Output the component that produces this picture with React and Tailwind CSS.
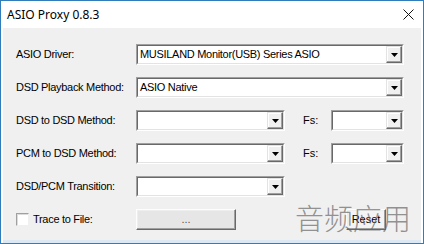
import React from "react";

const font = "font-['Tahoma','Liberation_Sans','DejaVu_Sans',sans-serif]";

// Classic Win32 sunken combo box
const Combo = ({ value = "", className = "" }) => (
  <div className={`h-[21px] border border-t-[#a0a0a0] border-l-[#a0a0a0] border-b-white border-r-white ${className}`}>
    <div className="h-full flex border border-t-[#696969] border-l-[#696969] border-b-[#e3e3e3] border-r-[#e3e3e3] bg-white">
      <div className="flex-1 pl-[2px] text-[11px] tracking-[-0.3px] leading-[17px] text-black whitespace-nowrap overflow-hidden">{value}</div>
      <div className="w-[16px] h-full flex items-center justify-center bg-[#f0f0f0] border border-t-[#e3e3e3] border-l-[#e3e3e3] border-b-[#696969] border-r-[#696969] shadow-[inset_-1px_-1px_0_#a0a0a0,inset_1px_1px_0_#ffffff]">
        <svg width="7" height="4" viewBox="0 0 7 4">
          <path d="M0 0h7L3.5 4z" fill="#000" />
        </svg>
      </div>
    </div>
  </div>
);

const Button = ({ children, className = "" }) => (
  <div className={`h-[21px] flex items-center justify-center border border-t-[#fdfdfd] border-l-[#fdfdfd] border-b-[#696969] border-r-[#696969] shadow-[inset_-1px_-1px_0_#a0a0a0,inset_1px_1px_0_#eeeeee] text-[11px] ${className}`}>
    {children}
  </div>
);

const Row = ({ label, children }) => (
  <div className="flex items-center h-[21px]">
    <div className="w-[120px] text-[11px] tracking-[-0.3px] text-black whitespace-nowrap">{label}</div>
    {children}
  </div>
);

export default function App() {
  return (
    <div className={`w-[424px] h-[244px] flex flex-col border border-[#2f7dbb] bg-white ${font}`}>
      {/* Title bar */}
      <div className="h-[27px] shrink-0 flex items-center justify-between pl-[6px] pr-[9px]">
        <span className="text-[12px] text-black font-['Noto_Sans',sans-serif] pt-[1px]">ASIO Proxy 0.8.3</span>
        <svg width="11" height="11" viewBox="0 0 11 11">
          <path d="M0.5 0.5l10 10M10.5 0.5l-10 10" stroke="#111" strokeWidth="1" />
        </svg>
      </div>

      {/* Client area */}
      <div className="relative flex-1 mx-[2px] bg-[#f0f0f0] border-b-[3px] border-[#dce8f3] pt-[16px] pl-[13px] flex flex-col gap-[12px]">
        <Row label="ASIO Driver:">
          <Combo className="w-[268px]" value="MUSILAND Monitor(USB) Series ASIO" />
        </Row>
        <Row label="DSD Playback Method:">
          <Combo className="w-[268px]" value="ASIO Native" />
        </Row>
        <Row label="DSD to DSD Method:">
          <Combo className="w-[149px]" />
          <span className="ml-[18px] w-[28px] text-[11px]">Fs:</span>
          <Combo className="w-[73px]" />
        </Row>
        <Row label="PCM to DSD Method:">
          <Combo className="w-[149px]" />
          <span className="ml-[18px] w-[28px] text-[11px]">Fs:</span>
          <Combo className="w-[73px]" />
        </Row>
        <Row label="DSD/PCM Transition:">
          <Combo className="w-[149px]" />
        </Row>
        <div className="flex items-center h-[21px]">
          <div className="w-[120px] flex items-center gap-[4px] text-[11px] tracking-[-0.3px]">
            <div className="w-[13px] h-[13px] bg-white border border-t-[#a0a0a0] border-l-[#a0a0a0] border-b-[#f0f0f0] border-r-[#f0f0f0] shadow-[inset_1px_1px_0_#dcdcdc]" />
            <span>Trace to File:</span>
          </div>
          <Button className="w-[100px] text-[#555] bg-[#e6e6e6]">...</Button>
          <Button className="ml-[110px] w-[40px] text-black bg-[#f4f4f4]">Reset</Button>
        </div>

        {/* watermark overlay */}
        <div className="pointer-events-none absolute left-[292px] top-[173px] text-[29px] leading-[32px] font-extralight text-[#666]/70 font-['Noto_Sans_CJK_SC',sans-serif]">
          音频应用
        </div>
      </div>
    </div>
  );
}
